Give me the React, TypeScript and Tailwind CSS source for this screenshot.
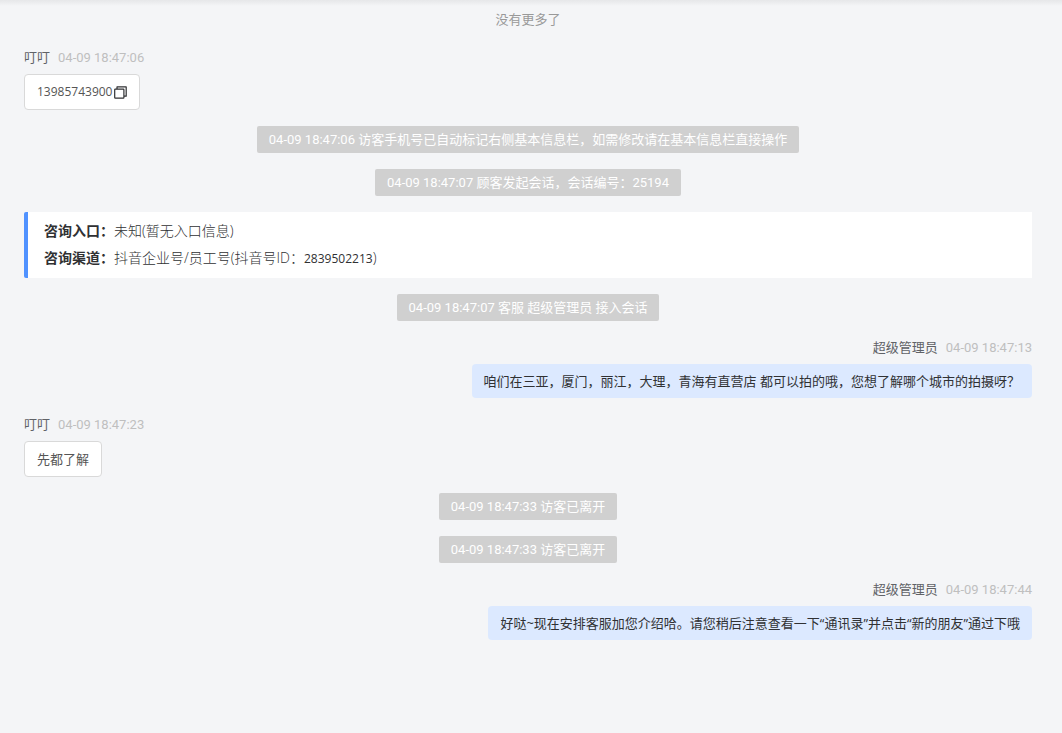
import classNames from "clsx";
import type { ReactNode } from "react";

type MessageType =
    | { kind: "notice"; time: string; text: string }
    | { kind: "source" }
    | {
          kind: "visitor" | "staff";
          name: string;
          time: string;
          text: string;
          copyable?: boolean;
      };

const messages: MessageType[] = [
    {
        kind: "visitor",
        name: "叮叮",
        time: "04-09 18:47:06",
        text: "13985743900",
        copyable: true,
    },
    {
        kind: "notice",
        time: "04-09 18:47:06",
        text: "访客手机号已自动标记右侧基本信息栏，如需修改请在基本信息栏直接操作",
    },
    {
        kind: "notice",
        time: "04-09 18:47:07",
        text: "顾客发起会话，会话编号：25194",
    },
    { kind: "source" },
    {
        kind: "notice",
        time: "04-09 18:47:07",
        text: "客服 超级管理员 接入会话",
    },
    {
        kind: "staff",
        name: "超级管理员",
        time: "04-09 18:47:13",
        text: "咱们在三亚，厦门，丽江，大理，青海有直营店 都可以拍的哦，您想了解哪个城市的拍摄呀？",
    },
    {
        kind: "visitor",
        name: "叮叮",
        time: "04-09 18:47:23",
        text: "先都了解",
    },
    { kind: "notice", time: "04-09 18:47:33", text: "访客已离开" },
    { kind: "notice", time: "04-09 18:47:33", text: "访客已离开" },
    {
        kind: "staff",
        name: "超级管理员",
        time: "04-09 18:47:44",
        text: "好哒~现在安排客服加您介绍哈。请您稍后注意查看一下“通讯录”并点击“新的朋友”通过下哦",
    },
];

const CopyIcon = () => (
    <svg
        className="size-[13px]"
        viewBox="0 0 13 13"
        fill="none"
        stroke="currentColor"
        strokeWidth="1.2"
        strokeLinejoin="round"
    >
        <rect x="0.7" y="3.2" width="9.2" height="9" rx="0.6" />
        <path d="M3 3V0.9h9.2v9.3H10" />
    </svg>
);

const Notice = ({ time, text }: { time: string; text: string }) => (
    <div className="flex justify-center">
        <p className="rounded-xs bg-[#d0d0d0] px-3 font-['Roboto','Noto_Sans_CJK_SC',sans-serif] leading-[27px] text-white">
            {time} {text}
        </p>
    </div>
);

const SourceRow = ({
    label,
    children,
}: {
    label: string;
    children: ReactNode;
}) => (
    <div className="flex">
        <dt className="font-bold text-[#303133]">{label}：</dt>
        <dd className="font-light text-[#303133]">{children}</dd>
    </div>
);

const Source = () => (
    <dl className="rounded-l-xs border-l-4 border-[#5092ff] bg-white px-4 pt-[5px] pb-[7px] text-sm leading-[27px]">
        <SourceRow label="咨询入口">未知(暂无入口信息)</SourceRow>
        <SourceRow label="咨询渠道">
            抖音企业号/员工号(抖音号ID：
            <span className="text-xs font-normal">2839502213</span>)
        </SourceRow>
    </dl>
);

const App = () => {
    return (
        <div className="min-h-screen bg-[#f4f5f7] font-['Open_Sans','Noto_Sans_CJK_SC',sans-serif] text-[13px]">
            <div className="h-1.5 bg-linear-to-b from-[#e6e7e9] to-[#f4f5f7]"></div>
            <main className="pb-6 pl-6 pr-[30px]">
                <p className="mb-3.5 text-center leading-[27px] text-[#999999]">
                    没有更多了
                </p>
                <div className="flex flex-col gap-4">
                    {messages.map((message, i) => {
                        if (message.kind == "notice")
                            return (
                                <Notice
                                    key={i}
                                    time={message.time}
                                    text={message.text}
                                />
                            );
                        if (message.kind == "source")
                            return <Source key={i} />;
                        return (
                            <div
                                key={i}
                                className={classNames("flex flex-col", {
                                    "items-start": message.kind == "visitor",
                                    "items-end": message.kind == "staff",
                                })}
                            >
                                <div className="mb-1.5 flex gap-2 leading-[21px]">
                                    <span className="text-[#606266]">
                                        {message.name}
                                    </span>
                                    <time className="font-['Roboto',sans-serif] text-[#bfbfbf]">
                                        {message.time}
                                    </time>
                                </div>
                                <div
                                    className={classNames(
                                        "flex items-center rounded-sm px-3 leading-[34px]",
                                        {
                                            "border border-[#d9d9d9] bg-white text-[#555555]":
                                                message.kind == "visitor",
                                            "bg-[#dce9ff] text-[#303133]":
                                                message.kind == "staff",
                                            "gap-0.5 text-xs leading-[34px]":
                                                message.copyable,
                                        }
                                    )}
                                >
                                    {message.text}
                                    {message.copyable && (
                                        <button
                                            type="button"
                                            aria-label="复制"
                                            className="cursor-pointer text-[#303133]"
                                        >
                                            <CopyIcon />
                                        </button>
                                    )}
                                </div>
                            </div>
                        );
                    })}
                </div>
            </main>
        </div>
    );
};
export default App;
